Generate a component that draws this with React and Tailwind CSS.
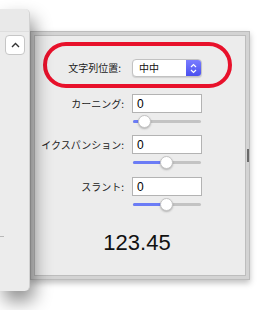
import React from 'react';

const jp = { fontFamily: '"Noto Sans CJK JP", "Noto Sans", sans-serif' };
const num = { fontFamily: '"Liberation Sans", Arial, sans-serif' };

function Slider({ pos }) {
  // pos = thumb centre in px from the track start
  return (
    <div className="relative h-[16px] w-[70px]">
      <div className="absolute left-[1px] right-[1px] top-[7px] h-[3px] rounded-full bg-[#c3c3c3]" />
      <div className="absolute left-[1px] top-[7px] h-[3px] rounded-full bg-[#6b7cf6]" style={{ width: pos }} />
      <div
        className="absolute top-[2px] h-[13px] w-[13px] rounded-full border border-[#c4c4c4] bg-white shadow-[0_1px_2px_rgba(0,0,0,0.25)]"
        style={{ left: pos - 6 }}
      />
    </div>
  );
}

function Field({ label, pos, first }) {
  return (
    <div className={first ? '' : 'mt-[6px]'}>
      <div className="flex items-center">
        <div className="w-[89px] text-right text-[10px] leading-none text-[#222]" style={jp}>{label}</div>
        <div className="ml-[8px] flex h-[19px] w-[70px] items-center border border-[#b3b3b3] bg-white pl-[4px] text-[12px] text-black" style={num}>
          0
        </div>
      </div>
      <div className="ml-[97px]">
        <Slider pos={pos} />
      </div>
    </div>
  );
}

export default function App() {
  return (
    <div className="h-[310px] w-[265px] overflow-hidden bg-white">
      <div className="flex">
        {/* side panel */}
        <div className="relative z-10 mt-[9px] flex h-[282px] w-[30px] flex-col rounded-r-[5px] border-r border-[#d2d2d2] bg-[#ececec] shadow-[4px_10px_18px_rgba(0,0,0,0.45)]">
          <div className="h-[23px] rounded-tr-[5px] border-b border-[#dedede] bg-[#e9e9e9]" />
          <div className="ml-[5px] mt-[3px] flex h-[20px] w-[20px] items-center justify-center rounded-[4px] border border-[#c6c6c6] bg-white">
            <svg width="9" height="6" viewBox="0 0 9 6">
              <path d="M1 5 L4.5 1.5 L8 5" fill="none" stroke="#333" strokeWidth="1.4" />
            </svg>
          </div>
          <div className="mt-[181px] h-px w-[4px] bg-[#b8b8b8]" />
        </div>

        {/* main window */}
        <div className="mt-[31px] h-[249px] w-[220px] border border-[#bcbcbc] bg-[#d3d3d3] p-[3px] shadow-[0_3px_6px_rgba(0,0,0,0.25)]">
          <div className="relative h-full w-full border border-[#bdbdbd] bg-[#ececec]">
            <div className="absolute right-[-4px] top-[113px] h-[13px] w-[2px] bg-[#6a6a6a]" />
            <div className="ml-[8px] mt-[6px] flex h-[46px] w-[189px] items-start rounded-full border-[4px] border-[#e8112b] pt-[13px]">
              <div className="flex w-[74px] items-center justify-end h-[18px] text-[10px] leading-none text-[#222]" style={jp}>文字列位置:</div>
              <div className="ml-[11px] flex h-[18px] w-[70px] overflow-hidden rounded-[4px] border border-[#c2c2c2] bg-white shadow-[0_1px_1px_rgba(0,0,0,0.12)]">
                <div className="flex flex-1 items-center pl-[6px] text-[10px] leading-none text-[#111]" style={jp}>中中</div>
                <div className="flex w-[15px] items-center justify-center bg-gradient-to-b from-[#7a7cff] to-[#4b4fef]">
                  <svg width="7" height="11" viewBox="0 0 7 11">
                    <path d="M1 4 L3.5 1.5 L6 4 M1 7 L3.5 9.5 L6 7" fill="none" stroke="#fff" strokeWidth="1.2" />
                  </svg>
                </div>
              </div>
            </div>
            <div className="mt-[6px]">
              <Field label="カーニング:" pos={12} first />
              <Field label="イクスパンション:" pos={34} />
              <div className="h-px" />
              <Field label="スラント:" pos={34} />
            </div>
            <div className="mt-[18px] pr-[6px] text-center text-[22px] leading-[26px] text-[#111]" style={num}>123.45</div>
          </div>
        </div>
      </div>
    </div>
  );
}
